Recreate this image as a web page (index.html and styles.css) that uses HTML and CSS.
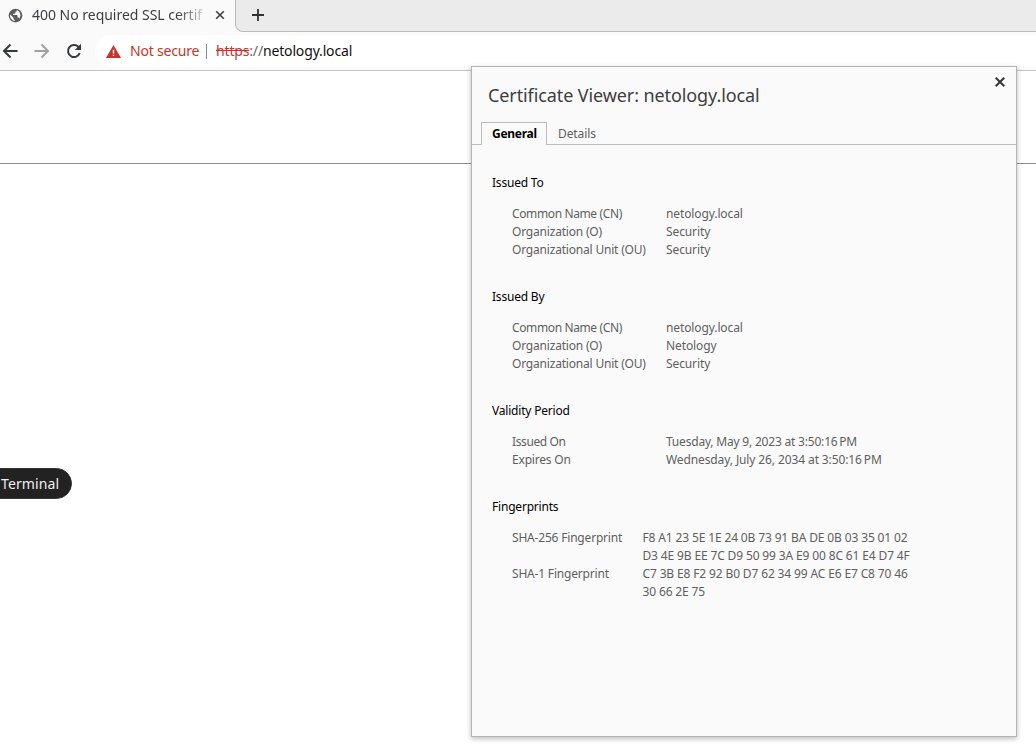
FILE: index.html
```
<!DOCTYPE html>
<html lang="en">
<head>
<meta charset="utf-8">
<title>400 No required SSL certificate was sent</title>
<link rel="stylesheet" href="styles.css">
</head>
<body>
<header class="browser">
  <div class="tabstrip">
    <div class="tab">
      <svg class="globe" viewBox="0 0 24 24"><circle cx="12" cy="12" r="11" fill="#5b5d60"/><path fill="#fafafa" d="M14 3.2v.8c0 1.3-1 2-2.200 2v2c0 .7-.6 1.200-1.300 1.200H8v2h6c.7 0 1.200.5 1.200 1.200v2.800h1c1 0 1.800.6 2.100 1.400A9 9 0 0 0 14 3.200zM3.300 10.200A9 9 0 0 0 11 20.900V19c-1.200 0-2.200-1-2.200-2.200v-1.100z"/></svg>
      <span class="tab-title">400 No required SSL certif</span>
      <svg class="tab-close" viewBox="0 0 10 10"><path d="M1.200 1.200l7.600 7.600M8.800 1.200L1.200 8.800"/></svg>
    </div>
    <div class="strip-rest">
      <svg class="plus" viewBox="0 0 12 12"><path d="M6 0v12M0 6h12"/></svg>
    </div>
  </div>
  <div class="toolbar">
    <svg class="nav back" viewBox="0 0 16 16"><path d="M15.500 8H2.500M8.500 1.500L2 8l6.500 6.500"/></svg>
    <svg class="nav forward" viewBox="0 0 16 16"><path d="M.5 8h13M7.500 1.500L14 8l-6.500 6.500"/></svg>
    <svg class="nav reload" viewBox="0 0 16 16"><path d="M13.700 10A6 6 0 1 1 12.300 3.800L14 5.500"/><path class="head" d="M15 .8v6.200H8.800z"/></svg>
    <div class="omnibox">
      <svg class="warning" viewBox="0 0 15 13"><path fill="#c5352b" d="M7.500 0L15 13H0z"/><path fill="#fff" d="M6.800 4.800h1.400v3.600H6.800zM6.800 9.700h1.400v1.400H6.800z"/></svg>
      <span class="not-secure">Not secure</span>
      <span class="divider"></span>
      <span class="url"><s>https</s><span class="slashes">://</span>netology.local</span>
    </div>
  </div>
</header>
<main class="page"><hr class="rule"></main>

<div class="tooltip">Terminal</div>

<section class="dialog">
  <svg class="dialog-close" viewBox="0 0 10 10"><path d="M.7.7l8.600 8.600M9.300.7L.7 9.300"/></svg>
  <h1 class="dialog-title">Certificate Viewer: netology.local</h1>
  <nav class="tabs">
    <span class="cert-tab active">General</span>
    <span class="cert-tab">Details</span>
  </nav>
  <div class="content">
    <h2 class="group-title">Issued To</h2>
    <dl class="fields">
      <dt class="tight">Common Name (CN)</dt><dd>netology.local</dd>
      <dt>Organization (O)</dt><dd>Security</dd>
      <dt>Organizational Unit (OU)</dt><dd>Security</dd>
    </dl>
    <h2 class="group-title">Issued By</h2>
    <dl class="fields">
      <dt class="tight">Common Name (CN)</dt><dd>netology.local</dd>
      <dt>Organization (O)</dt><dd>Netology</dd>
      <dt>Organizational Unit (OU)</dt><dd>Security</dd>
    </dl>
    <h2 class="group-title">Validity Period</h2>
    <dl class="fields">
      <dt class="tight">Issued On</dt><dd class="issued">Tuesday, May 9, 2023 at 3:50:16&#8239;PM</dd>
      <dt>Expires On</dt><dd>Wednesday, July 26, 2034 at 3:50:16&#8239;PM</dd>
    </dl>
    <h2 class="group-title">Fingerprints</h2>
    <dl class="fields prints">
      <dt>SHA-256 Fingerprint</dt>
      <dd>F8 A1 23 5E 1E 24 0B 73 91 BA DE 0B 03 35 01 02<br>D3 4E 9B EE 7C D9 50 99 3A E9 00 8C 61 E4 D7 4F</dd>
      <dt>SHA-1 Fingerprint</dt>
      <dd>C7 3B E8 F2 92 B0 D7 62 34 99 AC E6 E7 C8 70 46<br>30 66 2E 75</dd>
    </dl>
  </div>
</section>
</body>
</html>
```
FILE: styles.css
```
* { box-sizing: border-box; }
body {
  margin: 0;
  height: 747px;
  overflow: hidden;
  position: relative;
  background: #fff;
  font-family: "Noto Sans", "Open Sans", sans-serif;
  white-space: nowrap;
}
svg { display: block; flex: none; fill: none; stroke: none; }
.browser { background: #fafafa; height: 71px; border-bottom: 1px solid #c2c2c2; }
.tabstrip { display: flex; height: 32px; }
.tab { width: 235px; display: flex; align-items: center; padding: 0 0 2px 8px; }
.globe { width: 15px; height: 15px; }
.tab-title {
  width: 174px; margin-left: 9px;
  font-size: 14px; line-height: 20px; color: #3c3f42; letter-spacing: -.02px;
  -webkit-mask-image: linear-gradient(to right, #000 145px, transparent 178px);
  mask-image: linear-gradient(to right, #000 145px, transparent 178px);
}
.tab-close { width: 10px; height: 10px; margin-left: 9px; stroke: #3c3f42; stroke-width: 1.6; }
.strip-rest {
  flex: 1; background: #ebebeb; border: 1px solid #b9b9b9;
  border-top: 0; border-right: 0; border-bottom-left-radius: 8px;
  padding: 9px 0 0 16px;
}
.plus { width: 12px; height: 12px; stroke: #303336; stroke-width: 1.8; }
.toolbar { display: flex; align-items: center; height: 38px; padding-left: 2px; }
.nav { width: 16px; height: 16px; stroke: #36393c; stroke-width: 2; }
.forward { margin-left: 16px; stroke: #a0a1a3; }
.reload { margin-left: 16px; }
.reload .head { fill: #36393c; stroke: none; }
.omnibox {
  flex: 1; display: flex; align-items: center; height: 32px; margin-left: 13px;
  padding-left: 11px; background: #fff; border-radius: 16px 0 0 16px;
  font-size: 14px; line-height: 20px;
}
.warning { width: 15px; height: 13px; }
.not-secure { color: #c5352b; width: 69px; margin-left: 9px; letter-spacing: -.2px; }
.divider { width: 1px; height: 15px; background: #8b8b8b; margin: 0 9px 0 7px; }
.url { color: #111; letter-spacing: -.16px; }
.url s { color: #c5352b; }
.slashes { color: #666; }
.page { height: 676px; padding-top: 92px; }
.rule { margin: 0; border: 0; border-top: 1px solid #909090; }

.tooltip {
  position: absolute; left: -20px; top: 468px; width: 92px; height: 31px;
  padding-left: 20px; border-radius: 16px; background: #222; border: 1px solid #333;
  color: #eee; font-size: 14px; line-height: 29px; letter-spacing: .1px;
}

.dialog {
  position: absolute; left: 471px; top: 66px; width: 546px; height: 671px;
  background: #fafafa; border: 1px solid #b4b4b4;
  box-shadow: 0 2px 5px rgba(0,0,0,.25);
  font-size: 12px; line-height: 18px; color: #5f5f5f;
}
.dialog-close { position: absolute; right: 11px; top: 10px; width: 10px; height: 10px; stroke: #333; stroke-width: 2; }
.dialog-title { margin: 0; padding: 16px 0 0 16px; font-size: 18px; line-height: 24px; font-weight: 400; color: #3e3e3e; letter-spacing: -.1px; }
.tabs { display: flex; height: 23px; margin-top: 15px; padding-left: 9px; border-bottom: 1px solid #bdbdbd; }
.cert-tab { padding: 2px 10px 0; border: 1px solid transparent; border-bottom: 0; line-height: 17px; letter-spacing: -.1px; }
.cert-tab.active { width: 66px; height: 23px; background: #fafafa; border-color: #bdbdbd; color: #000; font-weight: 700; letter-spacing: -.27px; }
.content { padding: 29px 20px 0; }
.group-title { margin: 0 0 13px; font-size: 12px; line-height: 18px; font-weight: 400; color: #000; letter-spacing: -.2px; }
.fields { display: grid; grid-template-columns: 154px 1fr; margin: 0 0 29px 20px; }
.fields dt, .fields dd { margin: 0; }
.fields dt { letter-spacing: -.19px; }
.fields dt.tight { letter-spacing: -.38px; }
.fields dd { letter-spacing: -.11px; }
.fields dd.issued { letter-spacing: -.2px; }
.prints { grid-template-columns: 131px 1fr; }
.prints dd { margin-left: -.5px; letter-spacing: -.14px; }
```
